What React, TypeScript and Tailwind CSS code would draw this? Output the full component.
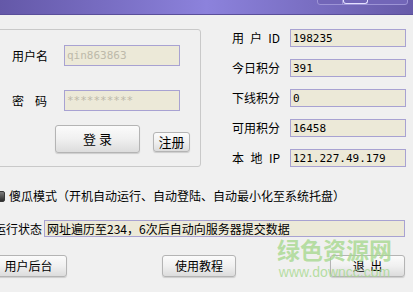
const cjk = "font-['SimSun','Noto_Sans_CJK_SC',sans-serif]"
const mono = "font-['DejaVu_Sans_Mono','Noto_Sans_CJK_SC',monospace]"

function Field({ value, className = '' }: { value: string; className?: string }) {
  return (
    <div
      className={`flex items-center border border-[#a8a2d2] bg-[#ece9d8] px-[2px] text-[11px] leading-none ${mono} ${className}`}
    >
      {value}
    </div>
  )
}

function Btn({ label, className = '' }: { label: string; className?: string }) {
  return (
    <div
      className={`flex items-center justify-center whitespace-pre rounded-[3px] border border-[#b4b4b4] bg-gradient-to-b from-[#fbfbfb] via-[#f0f0f0] to-[#dcdcdc] text-[12px] text-black shadow-[0_1px_1px_rgba(0,0,0,0.15)] ${cjk} ${className}`}
    >
      {label}
    </div>
  )
}

function Spread({ parts, className = '' }: { parts: string[]; className?: string }) {
  return (
    <span className={`flex justify-between text-[12px] text-black ${className}`}>
      {parts.map((p) => (
        <span key={p}>{p}</span>
      ))}
    </span>
  )
}

const infoRows = [
  { label: ['用', '户', 'ID'], value: '198235' },
  { label: ['今日积分'], value: '391' },
  { label: ['下线积分'], value: '0' },
  { label: ['可用积分'], value: '16458' },
  { label: ['本', '地', 'IP'], value: '121.227.49.179' },
]

export default function App() {
  return (
    <div className={`relative h-[292px] w-[413px] overflow-hidden bg-[#f0f0f0] ${cjk}`}>
      {/* title bar */}
      <div className="relative h-[15px] border-b border-[#5a4f9a] bg-gradient-to-r from-[#6458a8] via-[#8c82dc] to-[#675ba9]">
        <div className="absolute left-[317px] top-[-2px] flex h-[7px] w-[91px] rounded-b-[3px] border border-[#9d94d6] bg-[#7266b8]">
          <div className="w-[25px] border-r border-[#9d94d6]" />
          <div className="w-[25px] rounded-b-[3px] border border-t-0 border-[#e4e0ff]" />
          <div className="flex-1" />
        </div>
      </div>

      <div className="flex">
        {/* login panel */}
        <div className="ml-[-8px] mt-[14px] h-[138px] w-[209px] rounded-[3px] border border-[#c9c9c9] pl-[19px]">
          <div className="mt-[15px] flex h-[21px] items-center">
            <span className="w-[52px] text-[12px] text-black">用户名</span>
            <Field value="qin863863" className="h-[21px] w-[116px] text-[#bdb9aa]" />
          </div>
          <div className="mt-[24px] flex h-[21px] items-center">
            <Spread parts={['密', '码']} className="mr-[17px] w-[35px]" />
            <Field value="**********" className="h-[21px] w-[116px] text-[#bdb9aa]" />
          </div>
          <div className="mt-[14px] flex items-start">
            <Btn label="登 录" className="ml-[43px] h-[28px] w-[85px] text-[13px]" />
            <Btn label="注册" className="ml-[13px] mt-[7px] h-[20px] w-[37px] text-[13px]" />
          </div>
        </div>

        {/* info panel */}
        <div className="ml-[31px] mt-[14px] flex flex-col gap-[12px]">
          {infoRows.map((r) => (
            <div key={r.value} className="flex h-[18px] items-center">
              <Spread parts={r.label} className="mr-[10px] w-[48px]" />
              <Field value={r.value} className="h-[18px] w-[116px] text-black" />
            </div>
          ))}
        </div>
      </div>

      {/* auto mode */}
      <div className="mt-[22px] flex h-[14px] items-center whitespace-nowrap text-[12px] text-black">
        <div className="ml-[-6px] h-[11px] w-[11px] rounded-[2px] border border-[#3a3a3a] bg-gradient-to-b from-[#7d7d7d] to-[#2d2d2d]" />
        <span className="ml-[4px]">傻瓜模式（开机自动运行、自动登陆、自动最小化至系统托盘）</span>
      </div>

      {/* status */}
      <div className="mt-[17px] flex h-[17px] items-center whitespace-nowrap">
        <span className="ml-[-6px] w-[50px] text-[12px] text-black">运行状态</span>
        <div className="flex h-[17px] w-[361px] items-center border border-[#a8a2d2] bg-[#ece9d8] px-[2px] text-[12px] text-black">
          网址遍历至234，6次后自动向服务器提交数据
        </div>
      </div>

      {/* bottom buttons */}
      <div className="mt-[18px] flex">
        <Btn label="用户后台" className="ml-[-10px] h-[22px] w-[77px]" />
        <Btn label="使用教程" className="ml-[95px] h-[22px] w-[74px]" />
        <Btn label="退  出" className="ml-[94px] h-[22px] w-[75px]" />
      </div>

      {/* watermark */}
      <div className="pointer-events-none absolute left-[277px] top-[238px] flex flex-col items-center leading-none">
        <span className="font-['Noto_Sans_CJK_SC',sans-serif] text-[23px] font-bold text-[#a6d88e]/80">
          绿色资源网
        </span>
        <span className="mt-[4px] font-['Liberation_Sans',sans-serif] text-[14px] text-[#a6d88e]/80">
          www.downcc.com
        </span>
      </div>
    </div>
  )
}
